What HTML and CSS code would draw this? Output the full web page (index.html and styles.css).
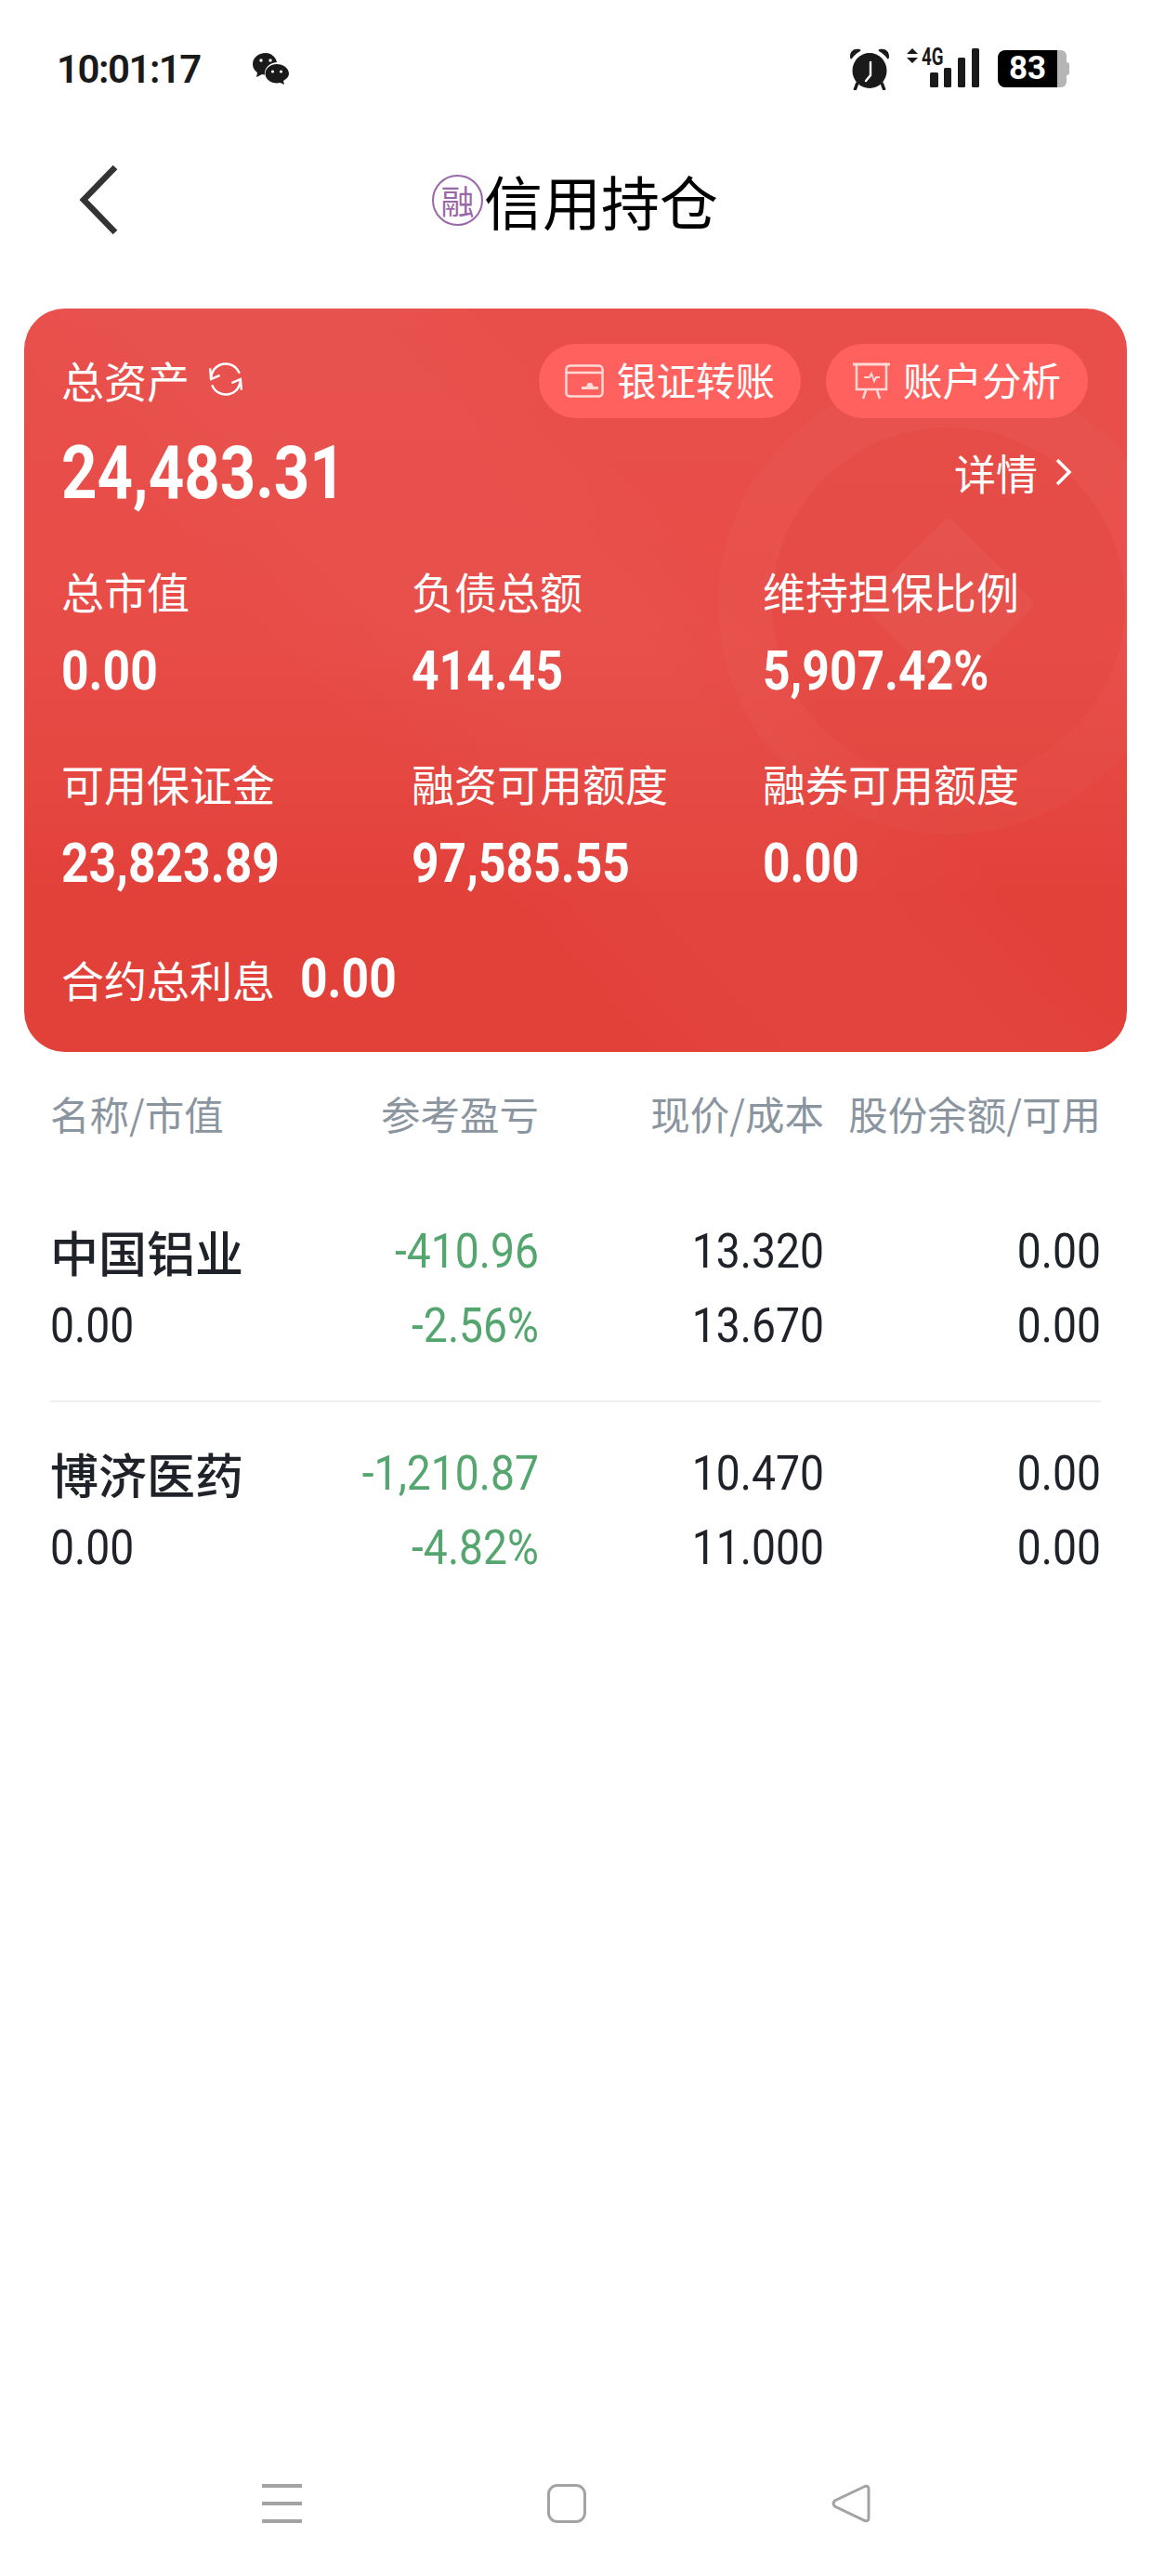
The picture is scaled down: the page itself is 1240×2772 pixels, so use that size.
FILE: index.html
```html
<!DOCTYPE html>
<html lang="zh-CN">

<head>
    <meta charset="UTF-8">
    <meta name="viewport" content="width=device-width, initial-scale=1.0">
    <title>信用持仓</title>
    <link rel="stylesheet" href="styles.css">
</head>

<body>
    <div class="page">
        <header class="status">
            <div class="status__left">
                <span class="status__time">10:01:17</span>
                <svg class="icon-wechat" viewBox="0 0 40 34" width="40" height="34">
                    <path d="M14 0C6 0 0 5.400 0 12c0 3.800 2 7 5 9.200L4 26l6-3c1 .3 2 .4 3 .5-1-6 4-13 13-13.500C25 4.500 20 0 14 0z" fill="#1a1a1a"/>
                    <path d="M26 12c-7 0-12.500 4.600-12.500 10.300S19 32.600 26 32.600c1.300 0 2.500-.2 3.600-.5l4.400 1.900-1-4c3.700-1.900 6-4.800 6-7.700C39 16.600 33 12 26 12z" fill="#1a1a1a"/>
                    <circle cx="9" cy="8" r="1.700" fill="#fff"/><circle cx="19" cy="8" r="1.700" fill="#fff"/>
                    <circle cx="21.500" cy="20" r="1.600" fill="#fff"/><circle cx="30.500" cy="20" r="1.600" fill="#fff"/>
                </svg>
            </div>
            <div class="status__right">
                <svg class="icon-alarm" viewBox="0 0 44 46" width="44" height="46">
                    <path d="M1 10C1 4 5 1 11 2c1 0 2 1 1 2-4 2-7 5-9 8-1 1-2 0-2-2zM43 10c0-6-4-9-10-8-1 0-2 1-1 2 4 2 7 5 9 8 1 1 2 0 2-2z" fill="#1a1a1a"/>
                    <ellipse cx="22" cy="25" rx="18.500" ry="19" fill="#1a1a1a"/>
                    <path d="M9 38l-3 8M35 38l3 8" stroke="#1a1a1a" stroke-width="3.500"/>
                    <path d="M23 16v14l-5 6" fill="none" stroke="#fff" stroke-width="2.400" stroke-linecap="round"/>
                </svg>
                <div class="signal">
                    <svg viewBox="0 0 78 44" width="78" height="44">
                        <path d="M6 0l6 6H0zM6 16l6-6H0z" fill="#1a1a1a"/>
                        <rect x="25" y="26" width="9" height="16" rx="1.500" fill="#1a1a1a"/>
                        <rect x="40" y="21" width="8" height="21" rx="1.500" fill="#1a1a1a"/>
                        <rect x="55" y="10" width="8" height="32" rx="1.500" fill="#1a1a1a"/>
                        <rect x="70" y="0" width="8" height="42" rx="1.500" fill="#1a1a1a"/>
                    </svg>
                    <span class="signal__type">4G</span>
                </div>
                <div class="battery"><span class="battery__level">83</span><span class="battery__rest"></span></div>
            </div>
        </header>

        <nav class="title-bar">
            <svg class="title-bar__back" viewBox="0 0 44 76" width="44" height="76">
                <path d="M39 3L5 38l34 35" fill="none" stroke="#333" stroke-width="6.500"/>
            </svg>
            <div class="title-bar__title">
                <span class="badge">融</span>
                <h1>信用持仓</h1>
            </div>
        </nav>

        <section class="asset">
            <div class="asset__coin"><div class="asset__coin-inner"><i></i></div></div>
            <div class="asset__top">
                <div class="asset__label">总资产
                    <svg viewBox="0 0 36 36" width="38" height="38">
                        <path d="M3 18A15 15 0 0 1 32 12M33 18A15 15 0 0 1 4 24" fill="none" stroke="#fff" stroke-width="2.300"/>
                        <path d="M2 7l1 11 9-4M34 29l-1-11-9 4" fill="none" stroke="#fff" stroke-width="2.300"/>
                    </svg>
                </div>
                <div class="asset__actions">
                    <span class="pill">
                        <svg viewBox="0 0 42 36" width="42" height="36">
                            <rect x="1.500" y="1.500" width="39" height="33" rx="4" fill="none" stroke="#ffd9d6" stroke-width="2.500"/>
                            <path d="M2 9h38" stroke="#ffd9d6" stroke-width="2.500"/>
                            <path d="M18 27h18v-3h-5l-2-4h-4l-2 4h-5z" fill="#ffd9d6"/>
                        </svg>银证转账</span>
                    <span class="pill">
                        <svg viewBox="0 0 40 40" width="40" height="40">
                            <path d="M0 2h40" stroke="#ffd9d6" stroke-width="3"/>
                            <path d="M4 3v26h32V3" fill="none" stroke="#ffd9d6" stroke-width="2.500"/>
                            <path d="M12 16h6l2-4 3 8 2-4h4" fill="none" stroke="#ffd9d6" stroke-width="2"/>
                            <path d="M14 30l-3 9M26 30l3 9" stroke="#ffd9d6" stroke-width="2.500"/>
                        </svg>账户分析</span>
                </div>
            </div>
            <div class="asset__total">
                <strong>24,483.31</strong>
                <span class="asset__more">详情
                    <svg viewBox="0 0 20 32" width="20" height="32"><path d="M3 3l13 13L3 29" fill="none" stroke="#fff" stroke-width="3.500"/></svg>
                </span>
            </div>
            <div class="asset__grid">
                <div class="stat"><span>总市值</span><b>0.00</b></div>
                <div class="stat"><span>负债总额</span><b>414.45</b></div>
                <div class="stat"><span>维持担保比例</span><b>5,907.42%</b></div>
                <div class="stat"><span>可用保证金</span><b>23,823.89</b></div>
                <div class="stat"><span>融资可用额度</span><b>97,585.55</b></div>
                <div class="stat"><span>融券可用额度</span><b>0.00</b></div>
            </div>
            <div class="asset__interest"><span>合约总利息</span><b>0.00</b></div>
        </section>

        <section class="holdings">
            <div class="holdings__head">
                <span>名称/市值</span>
                <span>参考盈亏</span>
                <span>现价/成本</span>
                <span>股份余额/可用</span>
            </div>
            <div class="row">
                <div class="row__name">中国铝业</div>
                <div class="num down">-410.96</div>
                <div class="num">13.320</div>
                <div class="num">0.00</div>
                <div class="row__value">0.00</div>
                <div class="num down">-2.56%</div>
                <div class="num">13.670</div>
                <div class="num">0.00</div>
            </div>
            <div class="row">
                <div class="row__name">博济医药</div>
                <div class="num down">-1,210.87</div>
                <div class="num">10.470</div>
                <div class="num">0.00</div>
                <div class="row__value">0.00</div>
                <div class="num down">-4.82%</div>
                <div class="num">11.000</div>
                <div class="num">0.00</div>
            </div>
        </section>

        <footer class="nav-bar">
            <div class="nav-bar__menu"><i></i><i></i><i></i></div>
            <div class="nav-bar__home"></div>
            <svg viewBox="0 0 42 42" width="42" height="42">
                <path d="M36 2.500L3.500 18q-3 3 0 6L36 39.500q4 1 4-3V5.500q0-4-4-3z" fill="none" stroke="#a3a3a3" stroke-width="3"/>
            </svg>
        </footer>
    </div>
</body>

</html>
```

FILE: styles.css
```css
* {
    margin: 0;
    padding: 0;
    box-sizing: border-box;
}

body {
    width: 1240px;
    height: 2772px;
    overflow: hidden;
    background-color: #fff;
    color: #1f2329;
    font-family: "Noto Sans CJK SC", "Noto Sans", sans-serif;
}

.page {
    display: flex;
    flex-direction: column;
    height: 100%;
}

/* status bar */
.status {
    display: flex;
    align-items: center;
    justify-content: space-between;
    height: 52px;
    margin-top: 48px;
    padding: 0 89px 0 61px;
}

.status__left {
    display: flex;
    align-items: center;
    gap: 56px;
}

.status__time {
    font-family: Roboto, sans-serif;
    font-size: 42px;
    font-weight: 600;
    letter-spacing: -1.500px;
    color: #1a1a1a;
}

.status__right {
    display: flex;
    align-items: center;
    gap: 18px;
}

.signal {
    position: relative;
    display: flex;
}

.signal__type {
    position: absolute;
    left: 16px;
    top: -5px;
    font-family: Roboto, sans-serif;
    font-size: 26px;
    font-weight: 700;
    line-height: 28px;
    color: #1a1a1a;
    transform: scaleX(.72);
    transform-origin: left;
}

.battery {
    position: relative;
    display: flex;
    align-items: stretch;
    width: 74px;
    height: 40px;
    margin-left: 2px;
    margin-right: 3px;
}

.battery__level {
    width: 64px;
    background: #000;
    border-radius: 8px 0 0 8px;
    color: #fff;
    font-family: Roboto, sans-serif;
    font-size: 35px;
    font-weight: 700;
    line-height: 40px;
    text-align: center;
}

.battery__rest {
    width: 10px;
    background: #b5b5b5;
    border-radius: 0 6px 6px 0;
}

.battery::after {
    content: "";
    position: absolute;
    left: 74px;
    top: 13px;
    width: 3px;
    height: 14px;
    border-radius: 0 3px 3px 0;
    background: #b5b5b5;
}

/* title */
.title-bar {
    position: relative;
    display: flex;
    align-items: center;
    justify-content: center;
    height: 100px;
    margin-top: 65px;
}

.title-bar__back {
    position: absolute;
    left: 85px;
    top: 12px;
}

.title-bar__title {
    display: flex;
    align-items: center;
    gap: 1px;
    margin-right: 2px;
}

.title-bar h1 {
    font-size: 63px;
    font-weight: 400;
    line-height: 100px;
    color: #000;
}

.badge {
    display: flex;
    align-items: center;
    justify-content: center;
    width: 55px;
    height: 55px;
    border: 2px solid #9a68a8;
    border-radius: 50%;
    color: #9a68a8;
    font-size: 36px;
    line-height: 1;
}

/* asset card */
.asset {
    position: relative;
    height: 800px;
    margin: 67px 27px 0 26px;
    padding: 38px 41px 0 40px;
    overflow: hidden;
    border-radius: 44px;
    background:
        linear-gradient(48deg, rgba(255, 255, 255, 0) 34%, rgba(255, 255, 255, .02) 44%, rgba(255, 255, 255, .02) 56%, rgba(255, 255, 255, 0) 64%),
        linear-gradient(180deg, #e84f4b 0%, #e84c47 45%, #e2413a 80%);
    color: #fff;
}

/* coin watermark, right side of the card */
.asset__coin {
    position: absolute;
    left: 747px;
    top: 70px;
    display: flex;
    align-items: center;
    justify-content: center;
    width: 496px;
    height: 496px;
    border-radius: 50%;
    background: rgba(255, 255, 255, .022);
}

.asset__coin-inner {
    display: flex;
    align-items: center;
    justify-content: center;
    width: 380px;
    height: 380px;
    border-radius: 50%;
    background: rgba(226, 65, 58, .3);
}

.asset__coin-inner i {
    width: 134px;
    height: 134px;
    border-radius: 8px;
    background: rgba(255, 255, 255, .035);
    transform: rotate(45deg);
}

.asset__top,
.asset__total,
.asset__grid,
.asset__interest {
    position: relative;
}

.asset__top {
    display: flex;
    align-items: center;
    justify-content: space-between;
    margin-right: 1px;
}

.asset__label {
    display: flex;
    align-items: center;
    gap: 20px;
    padding-bottom: 4px;
    font-size: 46px;
}

.asset__actions {
    display: flex;
    gap: 27px;
}

.pill {
    display: flex;
    align-items: center;
    justify-content: center;
    gap: 14px;
    width: 282px;
    height: 80px;
    padding-bottom: 5px;
    border-radius: 40px;
    background: #ff625e;
    font-size: 42.500px;
}

.pill svg {
    margin-top: 5px;
}

.asset__total {
    display: flex;
    align-items: center;
    justify-content: space-between;
    margin-top: 13px;
}

.asset__total strong {
    font-family: Roboto, sans-serif;
    font-size: 80px;
    font-weight: 700;
    line-height: 92px;
    transform: scaleX(.84);
    transform-origin: left;
}

.asset__more {
    display: flex;
    align-items: center;
    gap: 18px;
    padding-right: 17px;
    padding-bottom: 2px;
    font-size: 45px;
}

.asset__grid {
    display: grid;
    grid-template-columns: 377px 378px 1fr;
    row-gap: 58px;
    margin-top: 50px;
}

.stat {
    display: flex;
    flex-direction: column;
    gap: 25px;
}

.stat span {
    font-size: 46px;
    line-height: 60px;
}

.stat b,
.asset__interest b {
    font-family: Roboto, sans-serif;
    font-size: 60px;
    font-weight: 700;
    line-height: 64px;
    transform: scaleX(.86);
    transform-origin: left;
}

.asset__interest {
    display: flex;
    align-items: center;
    gap: 27px;
    margin-top: 59px;
    font-size: 46px;
}

/* holdings table */
.holdings {
    padding: 0 55px 0 54px;
}

.holdings__head {
    display: grid;
    grid-template-columns: 273px 253px 307px 298px;
    margin-top: 38px;
    margin-bottom: 44px;
    color: #8a95a0;
    font-size: 42.500px;
    line-height: 56px;
}

.holdings__head span {
    text-align: right;
}

.holdings__head span:first-child {
    text-align: left;
}

.row {
    display: grid;
    grid-template-columns: 273px 253px 307px 298px;
    row-gap: 20px;
    padding: 47px 0 50px;
    border-bottom: 2px solid #f0f0f0;
}

.row:last-child {
    border-bottom: 0;
}

.row__name {
    font-size: 52px;
    font-weight: 500;
    line-height: 60px;
}

.row__value,
.num {
    font-family: Roboto, sans-serif;
    font-size: 52px;
    line-height: 60px;
    transform: scaleX(.89);
}

.row__value {
    transform-origin: left;
}

.num {
    text-align: right;
    transform-origin: right;
}

.down {
    color: #55a56e;
}

/* system navigation */
.nav-bar {
    display: flex;
    align-items: center;
    justify-content: space-between;
    height: 42px;
    margin-top: auto;
    margin-bottom: 57px;
    padding: 0 303px 0 282px;
}

.nav-bar__menu {
    display: flex;
    flex-direction: column;
    justify-content: space-between;
    width: 43px;
    height: 42px;
}

.nav-bar__menu i {
    height: 4px;
    background: #a3a3a3;
}

.nav-bar__home {
    width: 42px;
    height: 42px;
    border: 3.500px solid #a3a3a3;
    border-radius: 11px;
}
```
